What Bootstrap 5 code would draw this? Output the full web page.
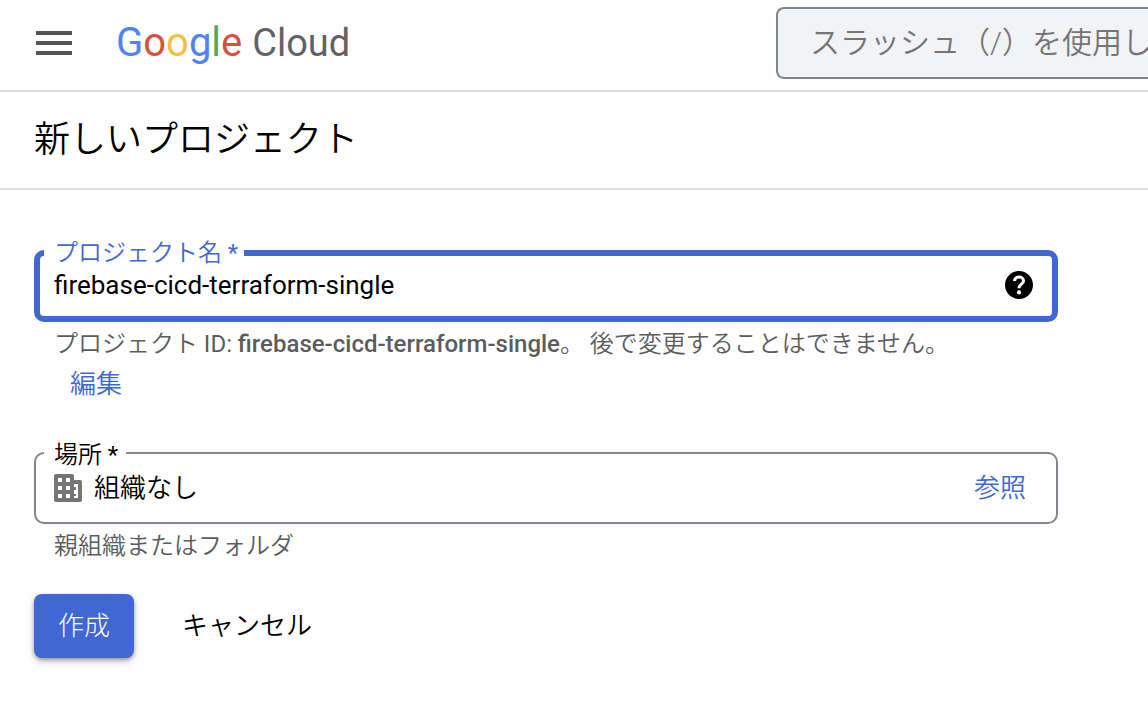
<!DOCTYPE html>
<html lang="ja">
<head>
<meta charset="utf-8">
<meta name="viewport" content="width=device-width, initial-scale=1">
<title>新しいプロジェクト</title>
<link href="https://cdn.jsdelivr.net/npm/bootstrap@5.3.0/dist/css/bootstrap.min.css" rel="stylesheet">
<style>
  :root { --brand: #4167d2; --outline: #80868b; }
  body { font-family: Roboto, "Noto Sans CJK JP", sans-serif; font-weight: 350; font-size: 26px; line-height: 32px; color: #000; background: #fff; overflow-x: hidden; }
  a { color: var(--brand); text-decoration: none; }
  .topbar { height: 92px; border-bottom: 2px solid #dadce0; padding: 0 0 4px 36px; }
  .menu-btn { width: 36px; height: 24px; }
  .brand-logo { margin-left: 44px; font-size: 40px; line-height: 48px; font-weight: 400; white-space: nowrap; }
  .brand-logo .cloud-word { font-size: 38px; color: #5f6368; }
  .search-wrap { flex: 0 0 372px; }
  .search-box { height: 72px; border: 2px solid var(--outline); border-right: 0; border-radius: 8px 0 0 8px; background: #f1f3f4; padding: 0 0 2px 32px; font-size: 30px; font-weight: 350; }
  .search-box::placeholder { color: #757575; opacity: 1; }
  .title-bar { height: 98px; border-bottom: 2px solid #e0e0e0; padding: 0 34px; }
  .title-bar h1 { font-size: 36px; line-height: 48px; font-weight: 350; }
  .form-area { padding: 60px 34px 0; }
  .form-col { max-width: 1024px; }
  .outlined { height: 72px; border: 2px solid var(--outline); border-radius: 10px; padding: 0 30px 0 18px; }
  .outlined.active-field { border: 6px solid var(--brand); padding: 0 19px 2px 14px; }
  .field-label { position: absolute; left: 8px; top: -15px; padding: 0 8px 0 10px; background: #fff; font-size: 24px; line-height: 32px; }
  .active-field .field-label { left: 4px; top: -19px; height: 28px; padding-right: 6px; color: var(--brand); }
  .text-entry { border: 0; background: transparent; outline: 0; padding: 0; min-width: 0; color: #000; font-weight: 400; position: relative; }
  .place-entry { font-weight: 350; }
  .note { font-size: 24px; line-height: 32px; color: #5c5c5c; padding: 6px 0 0 20px; }
  .note strong { font-weight: 500; }
  .edit-link { display: inline-block; margin: 8px 0 0 36px; }
  .place-group { margin-top: 52px; }
  .actions { margin-top: 32px; gap: 48px; }
  .btn-create, .btn-create:hover { width: 100px; height: 64px; padding: 0; border: 0; border-radius: 8px; background: var(--brand); color: #fff; font-size: 26px; font-weight: 300; box-shadow: 0 2px 4px rgba(0,0,0,.35), 0 4px 8px rgba(0,0,0,.12); }
  .btn-cancel { border: 0; padding: 0; color: #000; font-size: 26px; font-weight: 350; }
</style>
</head>
<body>
<header class="topbar d-flex align-items-center justify-content-between">
  <div class="d-flex align-items-center">
    <button type="button" class="menu-btn btn border-0 rounded-0 p-0 d-flex" aria-label="メニュー">
      <svg width="36" height="24" viewBox="0 0 36 24" fill="#545454"><path d="M0 0h36v4H0zM0 10h36v4H0zM0 20h36v4H0z"/></svg>
    </button>
    <a href="#" class="brand-logo"><span style="color:#4f83f1">G</span><span style="color:#d85040">o</span><span style="color:#f2bf42">o</span><span style="color:#4f83f1">g</span><span style="color:#58a55c">l</span><span style="color:#d85040">e</span> <span class="cloud-word">Cloud</span></a>
  </div>
  <div class="search-wrap">
    <input type="text" class="search-box form-control" placeholder="スラッシュ（/）を使用し" aria-label="検索">
  </div>
</header>

<div class="title-bar d-flex align-items-center">
  <h1 class="m-0">新しいプロジェクト</h1>
</div>

<main class="form-area pb-5">
  <form class="form-col">
    <div class="position-relative outlined active-field d-flex align-items-center">
      <label class="field-label" for="projectName">プロジェクト名 <span class="fw-normal">*</span></label>
      <input id="projectName" type="text" class="text-entry flex-grow-1" value="firebase-cicd-terraform-single">
      <button type="button" class="btn border-0 p-0 d-flex" aria-label="ヘルプ">
        <svg width="28" height="28" viewBox="2 2 20 20"><path d="M12 2C6.48 2 2 6.48 2 12s4.48 10 10 10 10-4.48 10-10S17.52 2 12 2z"/><path d="M8.800 9.200C8.800 7.300 10.200 6.300 12 6.300s3.200 1.100 3.200 2.800c0 2.300-3.200 2.400-3.200 5.200" fill="none" stroke="#fff" stroke-width="2.200"/><circle cx="12" cy="17.300" r="1.500" fill="#fff"/></svg>
      </button>
    </div>
    <div class="note">プロジェクト <span class="fw-normal">ID:</span> <strong>firebase-cicd-terraform-single</strong>。 後で変更することはできません。</div>
    <a href="#" class="edit-link">編集</a>

    <div class="place-group position-relative outlined d-flex align-items-center">
      <label class="field-label" for="place">場所 <span class="fw-normal">*</span></label>
      <svg width="28" height="28" viewBox="0 0 28 28" class="flex-shrink-0"><path fill="#757575" fill-rule="evenodd" d="M2 0h16a2 2 0 0 1 2 2v4h6a2 2 0 0 1 2 2v18a2 2 0 0 1-2 2H2a2 2 0 0 1-2-2V2a2 2 0 0 1 2-2zM4 4v4h4V4zM12 4v4h4V4zM4 12v4h4v-4zM12 12v4h4v-4zM4 20v4h4v-4zM12 20v4h4v-4zM20 10v3h2v3h-2v4h2v2h-2v2h4V10z"/></svg>
      <input id="place" type="text" class="text-entry place-entry flex-grow-1 ms-2 ps-1" value="組織なし" readonly>
      <a href="#">参照</a>
    </div>
    <div class="note">親組織またはフォルダ</div>

    <div class="d-flex align-items-center actions">
      <button type="submit" class="btn btn-create">作成</button>
      <button type="button" class="btn btn-cancel">キャンセル</button>
    </div>
  </form>
</main>
<script src="https://cdn.jsdelivr.net/npm/bootstrap@5.3.0/dist/js/bootstrap.bundle.min.js"></script>
</body>
</html>
